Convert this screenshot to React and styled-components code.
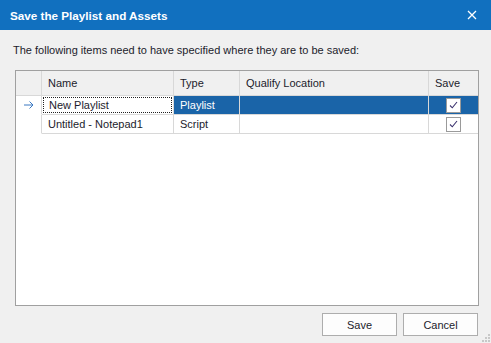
import React from 'react'
import styled, { createGlobalStyle } from 'styled-components';

const Global = createGlobalStyle`
html, body {
  margin: 0;
  padding: 0;
  background: #f0f0f0;
}
* { box-sizing: border-box; }
`;

const Dialog = styled.div`
width: 491px;
height: 343px;
display: flex;
flex-direction: column;
background: #f0f0f0;
font-family: "Liberation Sans", Arial, sans-serif;
font-size: 11px;
color: #1c1c2c;
position: relative;
overflow: hidden;
`;

const TitleBar = styled.div`
height: 30px;
flex: none;
background: #1170bf;
display: flex;
align-items: center;
justify-content: space-between;
padding: 0 14px 0 10px;
color: #fff;
font-weight: 700;
font-size: 11.7px;
`;

const Close = styled.div`
width: 10px;
height: 10px;
display: flex;
`;

const Content = styled.div`
flex: 1;
display: flex;
flex-direction: column;
padding: 12px 13px 9px 15px;
`;

const Desc = styled.div`
height: 16px;
line-height: 16px;
margin: 0 0 12px -2px;
`;

const Grid = styled.div`
width: 464px;
height: 236px;
border: 1px solid #a0a0a0;
background: #fff;
`;

const Row = styled.div`
display: grid;
grid-template-columns: 26px 132px 66px 189px 49px;
height: ${({ $head }) => ($head ? '25px' : '19px')};
background: ${({ $head }) => ($head ? '#f0f0f0' : 'transparent')};
`;

const Cell = styled.div`
display: flex;
align-items: center;
padding-left: ${({ $pad }) => ($pad ? '6px' : '0')};
justify-content: ${({ $center }) => ($center ? 'center' : 'flex-start')};
border-right: ${({ $last }) => ($last ? 'none' : '1px solid #d8d8d8')};
border-bottom: 1px solid ${({ $noline }) => ($noline ? 'transparent' : '#d8d8d8')};
background: ${({ $sel }) => ($sel ? '#1a64a8' : 'transparent')};
color: ${({ $sel }) => ($sel ? '#fff' : 'inherit')};
white-space: nowrap;
`;

const Focus = styled.div`
width: 100%;
height: 100%;
display: flex;
align-items: center;
padding-left: 5px;
border: 1px dotted #222;
`;

const Check = styled.div`
width: 15px;
height: 15px;
border: 1px solid #9a9a9a;
background: #fff;
display: flex;
align-items: center;
justify-content: center;
`;

const Footer = styled.div`
display: flex;
justify-content: flex-end;
gap: 6px;
margin-top: 7px;
`;

const Button = styled.div`
width: 75px;
height: 23px;
border: 1px solid #adadad;
background: #fdfdfd;
display: flex;
align-items: center;
justify-content: center;
`;

const Grip = styled.svg`
position: absolute;
right: 1px;
bottom: 1px;
`;

const Tick = () => (
  <svg width="9" height="8" viewBox="0 0 9 8">
    <path d="M1 4.5 L3.3 6.8 L8 1" fill="none" stroke="#3d3470" strokeWidth="1.1" />
  </svg>
);

const Arrow = () => (
  <svg width="10" height="8" viewBox="0 0 10 8">
    <path d="M0 4 H9 M5.5 0.5 L9 4 L5.5 7.5" fill="none" stroke="#3a78c2" strokeWidth="1" />
  </svg>
);

const rows = [
  { name: 'New Playlist', type: 'Playlist', sel: true },
  { name: 'Untitled - Notepad1', type: 'Script', sel: false },
];

export default function App() {
  return (
    <Dialog>
      <Global />
      <TitleBar>
        <span>Save the Playlist and Assets</span>
        <Close>
          <svg width="10" height="10" viewBox="0 0 10 10">
            <path d="M1 1 L9 9 M9 1 L1 9" stroke="#fff" strokeWidth="1.3" />
          </svg>
        </Close>
      </TitleBar>
      <Content>
        <Desc>The following items need to have specified where they are to be saved:</Desc>
        <Grid>
          <Row $head>
            <Cell />
            <Cell $pad>Name</Cell>
            <Cell $pad>Type</Cell>
            <Cell $pad>Qualify Location</Cell>
            <Cell $pad $last>Save</Cell>
          </Row>
          {rows.map((r) => (
            <Row key={r.name}>
              <Cell $center $noline style={{ paddingLeft: 1 }}>{r.sel && <Arrow />}</Cell>
              <Cell $pad={!r.sel} style={r.sel ? { padding: 1 } : undefined}>
                {r.sel ? <Focus>{r.name}</Focus> : r.name}
              </Cell>
              <Cell $pad $sel={r.sel}>{r.type}</Cell>
              <Cell $sel={r.sel} />
              <Cell $center $last $sel={r.sel}>
                <Check><Tick /></Check>
              </Cell>
            </Row>
          ))}
        </Grid>
        <Footer>
          <Button>Save</Button>
          <Button>Cancel</Button>
        </Footer>
      </Content>
      <Grip width="10" height="10" viewBox="0 0 10 10">
        {[[8, 2], [8, 5], [5, 5], [8, 8], [5, 8], [2, 8]].map(([x, y]) => (
          <rect key={x + '-' + y} x={x} y={y} width="2" height="2" fill="#c8c8c8" />
        ))}
      </Grip>
    </Dialog>
  );
}
